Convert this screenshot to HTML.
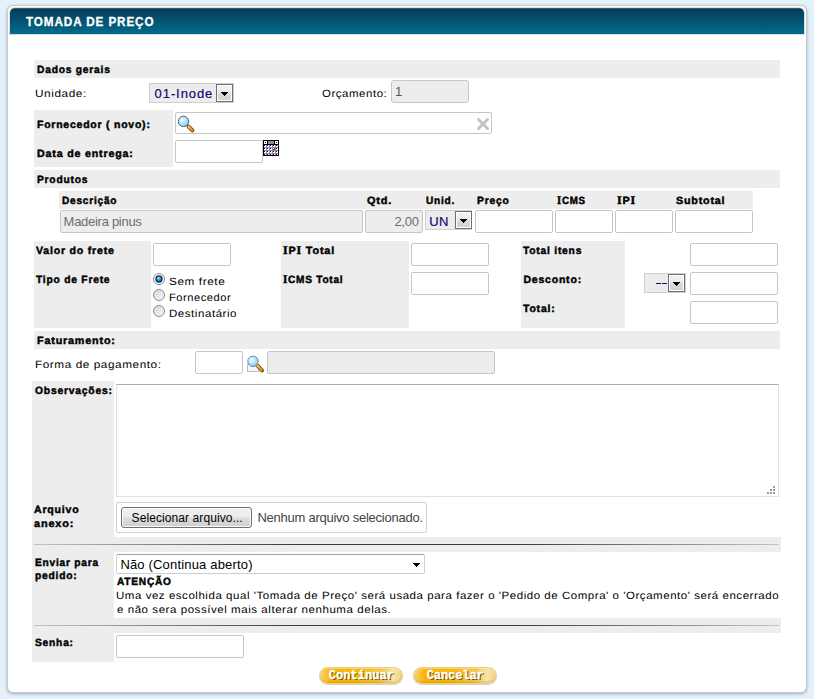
<!DOCTYPE html>
<html><head><meta charset="utf-8"><style>
*{box-sizing:border-box;margin:0;padding:0}
html,body{width:814px;height:699px;overflow:hidden;background:#e3f1fc;font-family:"Liberation Sans",sans-serif;position:relative}
.a{position:absolute}
.t{position:absolute;white-space:nowrap;font-family:"Liberation Sans",sans-serif}
.bar{position:absolute;background:#ededed}
.in{position:absolute;background:#fff;border:1px solid #c6c6c6;border-radius:2px}
.dis{background:#ededed;border-color:#c6c6c6}
.sel{position:absolute;background:#ececec;border:1px solid #cfcfcf}
.sb{position:absolute;border:1px solid #6f6f6f;background:linear-gradient(#f3f3f3 0,#ebebeb 45%,#dcdcdc 50%,#d0d0d0 100%);box-shadow:inset 0 0 0 1px #fff}
.tri{position:absolute;width:0;height:0;border-left:4px solid transparent;border-right:4px solid transparent;border-top:4px solid #000}
.hr{position:absolute;height:1px;background:linear-gradient(90deg,#c4c4c4 0,#3a3a3a 35%,#3a3a3a 65%,#c4c4c4 100%)}
.I{font-family:"Liberation Serif";font-size:11.5px}

</style></head><body>
<div class="a" style="left:7px;top:5px;width:800px;height:688px;background:#fff;border:1px solid #c8c8c8;border-radius:6px;box-shadow:0 1px 3px rgba(70,90,110,.45)"></div>
<div class="a" style="left:9px;top:7px;width:796px;height:28px;border:1px solid #dedada;border-bottom-color:#dcdcdc;border-radius:6px 6px 0 0"></div>
<div class="a" style="left:10px;top:8px;width:794px;height:26px;border-radius:5px 5px 0 0;background:linear-gradient(#46565e 0,#46565e 1px,#023d5a 1px,#036b8b 100%)"></div>

<!-- Dados gerais -->
<div class="bar" style="left:34px;top:60px;width:746px;height:18px"></div>
<div class="sel" style="left:149px;top:83px;width:85px;height:20px"><div class="sb" style="left:66px;top:0px;width:17px;height:18px"><svg class="a" style="left:4px;top:7px" width="7" height="4" shape-rendering="crispEdges"><path d="M0 0h7v1h-1v1h-1v1h-1v1h-1v-1h-1v-1h-1v-1h-1z" fill="#000"/></svg></div></div>
<div class="in dis" style="left:391px;top:80px;width:78px;height:23px;border-radius:3px"></div>
<div class="bar" style="left:34px;top:110px;width:139px;height:57px"></div>
<div class="in" style="left:175px;top:112px;width:317px;height:22px"></div>
<div class="in" style="left:175px;top:140px;width:88px;height:23px"></div>

<!-- Produtos -->
<div class="bar" style="left:34px;top:170px;width:746px;height:18px"></div>
<div class="bar" style="left:59px;top:191px;width:694px;height:18px"></div>
<div class="in dis" style="left:60px;top:210px;width:303px;height:23px"></div>
<div class="in dis" style="left:365px;top:210px;width:58px;height:23px"></div>
<div class="sel" style="left:425px;top:210px;width:47px;height:20px"><div class="sb" style="left:29px;top:0px;width:17px;height:18px"><svg class="a" style="left:4px;top:7px" width="7" height="4" shape-rendering="crispEdges"><path d="M0 0h7v1h-1v1h-1v1h-1v1h-1v-1h-1v-1h-1v-1h-1z" fill="#000"/></svg></div></div>
<div class="in" style="left:475px;top:210px;width:78px;height:23px"></div>
<div class="in" style="left:555px;top:210px;width:58px;height:23px"></div>
<div class="in" style="left:615px;top:210px;width:58px;height:23px"></div>
<div class="in" style="left:675px;top:210px;width:78px;height:23px"></div>

<!-- frete -->
<div class="bar" style="left:34px;top:241px;width:117px;height:87px"></div>
<div class="in" style="left:153px;top:243px;width:78px;height:23px"></div>
<div class="bar" style="left:281px;top:241px;width:128px;height:87px"></div>
<div class="in" style="left:411px;top:243px;width:78px;height:23px"></div>
<div class="in" style="left:411px;top:272px;width:78px;height:23px"></div>
<div class="bar" style="left:521px;top:241px;width:104px;height:87px"></div>
<div class="in" style="left:690px;top:243px;width:88px;height:23px"></div>
<div class="in" style="left:690px;top:272px;width:88px;height:23px"></div>
<div class="in" style="left:690px;top:301px;width:88px;height:23px"></div>
<div class="sel" style="left:644px;top:273px;width:42px;height:20px"><div class="sb" style="left:23px;top:0px;width:17px;height:18px"><svg class="a" style="left:4px;top:7px" width="7" height="4" shape-rendering="crispEdges"><path d="M0 0h7v1h-1v1h-1v1h-1v1h-1v-1h-1v-1h-1v-1h-1z" fill="#000"/></svg></div><div class="a" style="left:11px;top:9px;width:5px;height:1px;background:#0e0b70"></div><div class="a" style="left:17px;top:9px;width:5px;height:1px;background:#0e0b70"></div></div>

<!-- faturamento -->
<div class="bar" style="left:34px;top:331px;width:746px;height:18px"></div>
<div class="in" style="left:195px;top:351px;width:48px;height:23px"></div>
<div class="in dis" style="left:267px;top:351px;width:228px;height:23px"></div>

<!-- observacoes -->
<div class="bar" style="left:32px;top:381px;width:82px;height:156px"></div>
<div class="a" style="left:116px;top:384px;width:663px;height:113px;background:#fff;border:1px solid #dde2ea;border-top-color:#a9abb0"></div>
<div class="in" style="left:116px;top:502px;width:311px;height:31px;border-color:#d2d2d2"></div>
<div class="a" style="left:121px;top:507px;width:131px;height:21px;border:1px solid #707070;border-radius:3px;background:linear-gradient(#f2f2f2 0,#ebebeb 48%,#dddddd 52%,#cfcfcf 100%);box-shadow:inset 0 0 0 1px #fbfbfb"></div>

<!-- enviar -->
<div class="bar" style="left:32px;top:537px;width:749px;height:15px"></div>
<div class="hr" style="left:34px;top:544px;width:745px"></div>
<div class="bar" style="left:32px;top:552px;width:82px;height:66px"></div>
<div class="a" style="left:116px;top:554px;width:309px;height:20px;background:#fff;border:1px solid #c9cfd6;border-top-color:#9fa3a8;border-radius:2px"><svg class="a" style="left:296px;top:8px" width="7" height="4" shape-rendering="crispEdges"><path d="M0 0h7v1h-1v1h-1v1h-1v1h-1v-1h-1v-1h-1v-1h-1z" fill="#000"/></svg></div>
<div class="bar" style="left:32px;top:618px;width:749px;height:15px"></div>
<div class="hr" style="left:34px;top:625px;width:745px"></div>
<div class="bar" style="left:32px;top:633px;width:82px;height:29px"></div>
<div class="in" style="left:116px;top:635px;width:128px;height:23px"></div>

<!-- orange buttons -->
<div class="a" style="left:319px;top:667px;width:84px;height:17px;border-radius:8.5px;border:1px solid #e9cf86;background:linear-gradient(90deg,#f3d684 0,#fcb300 13%,#f9b500 45%,#f3c64c 75%,#f8e3a9 89%,#efd38a 100%);box-shadow:inset 0 1px 1px rgba(255,235,180,.55),inset 0 -2px 1px rgba(190,130,0,.22),0 1px 0 rgba(150,130,90,.35)"></div>
<div class="a" style="left:413px;top:667px;width:84px;height:17px;border-radius:8.5px;border:1px solid #e9cf86;background:linear-gradient(90deg,#f3d684 0,#fcb300 13%,#f9b500 45%,#f3c64c 75%,#f8e3a9 89%,#efd38a 100%);box-shadow:inset 0 1px 1px rgba(255,235,180,.55),inset 0 -2px 1px rgba(190,130,0,.22),0 1px 0 rgba(150,130,90,.35)"></div>

<!-- icons -->
<svg class="a" style="left:176px;top:114px" width="20" height="20" viewBox="0 0 20 20">
<defs><radialGradient id="lens" cx="35%" cy="35%" r="70%"><stop offset="0" stop-color="#f0fcff"/><stop offset="1" stop-color="#7fcdf0"/></radialGradient>
<linearGradient id="hdl" x1="0" y1="0" x2="1" y2="1"><stop offset="0" stop-color="#f7c85a"/><stop offset="1" stop-color="#d88a10"/></linearGradient></defs>
<line x1="12.6" y1="12.6" x2="16.4" y2="16.4" stroke="#6b4410" stroke-width="4" stroke-linecap="round"/>
<line x1="12.6" y1="12.6" x2="16.4" y2="16.4" stroke="url(#hdl)" stroke-width="2.2" stroke-linecap="round"/>
<circle cx="7.5" cy="7.4" r="5.2" fill="url(#lens)" stroke="#4a5a84" stroke-width="1"/>
</svg>
<svg class="a" style="left:476px;top:117px" width="14" height="14" viewBox="0 0 14 14">
<path d="M2.5 2.5 L11.5 11.5 M11.5 2.5 L2.5 11.5" stroke="#c2c2c2" stroke-width="3" stroke-linecap="round"/>
</svg>
<svg class="a" style="left:263px;top:140px" width="16" height="16" viewBox="0 0 16 16" shape-rendering="crispEdges">
<rect x="0" y="0" width="16" height="16" fill="#000"/>
<rect x="1" y="1" width="3" height="3" fill="#fff"/><rect x="2" y="2" width="1" height="1" fill="#000"/>
<rect x="12" y="1" width="3" height="3" fill="#fff"/><rect x="13" y="2" width="1" height="1" fill="#000"/>
<rect x="5" y="1" width="6" height="3" fill="#8c8c8c"/>
<rect x="1" y="5" width="14" height="10" fill="#8c8c8c"/>
<g fill="#fff">
<rect x="1" y="5" width="2" height="2"/><rect x="4" y="5" width="2" height="2"/><rect x="7" y="5" width="2" height="2"/><rect x="10" y="5" width="2" height="2"/><rect x="13" y="5" width="2" height="2"/>
<rect x="1" y="8" width="2" height="2"/><rect x="4" y="8" width="2" height="2"/><rect x="7" y="8" width="2" height="2"/><rect x="13" y="8" width="2" height="2"/>
<rect x="1" y="11" width="2" height="2"/><rect x="4" y="11" width="2" height="2"/><rect x="7" y="11" width="2" height="2"/><rect x="10" y="11" width="2" height="2"/><rect x="13" y="11" width="2" height="2"/>
<rect x="1" y="14" width="2" height="1"/><rect x="4" y="14" width="2" height="1"/><rect x="7" y="14" width="2" height="1"/><rect x="10" y="14" width="2" height="1"/><rect x="13" y="14" width="2" height="1"/>
</g>
<g fill="#0000e0">
<rect x="1" y="5" width="1" height="1"/><rect x="4" y="5" width="1" height="1"/><rect x="7" y="5" width="1" height="1"/><rect x="10" y="5" width="1" height="1"/><rect x="13" y="5" width="1" height="1"/>
<rect x="1" y="8" width="1" height="1"/><rect x="4" y="8" width="1" height="1"/><rect x="7" y="8" width="1" height="1"/><rect x="13" y="8" width="1" height="1"/>
<rect x="1" y="11" width="1" height="1"/><rect x="4" y="11" width="1" height="1"/><rect x="7" y="11" width="1" height="1"/><rect x="10" y="11" width="1" height="1"/><rect x="13" y="11" width="1" height="1"/>
<rect x="1" y="14" width="1" height="1"/><rect x="4" y="14" width="1" height="1"/><rect x="7" y="14" width="1" height="1"/><rect x="10" y="14" width="1" height="1"/><rect x="13" y="14" width="1" height="1"/>
</g>
<rect x="10" y="8" width="2" height="2" fill="#f00"/><rect x="10" y="8" width="1" height="1" fill="#ff0"/>
</svg>
<svg class="a" style="left:153px;top:273px" width="12" height="48" viewBox="0 0 12 48">
<defs><radialGradient id="dot" cx="40%" cy="30%" r="70%"><stop offset="0" stop-color="#b8eeff"/><stop offset=".45" stop-color="#3aa8e8"/><stop offset="1" stop-color="#0f6cc0"/></radialGradient>
<linearGradient id="rg" x1="0" y1="0" x2="1" y2="1"><stop offset="0" stop-color="#d4d4d4"/><stop offset="1" stop-color="#fafafa"/></linearGradient></defs>
<circle cx="6" cy="6" r="5.5" fill="#fff" stroke="#8a8a8a" stroke-width="1"/>
<circle cx="6" cy="6" r="3.7" fill="#0f2f52"/>
<circle cx="6" cy="6" r="2.4" fill="url(#dot)"/>
<circle cx="6" cy="22" r="5.5" fill="url(#rg)" stroke="#8e8e8e" stroke-width="1"/>
<circle cx="6" cy="38" r="5.5" fill="url(#rg)" stroke="#8e8e8e" stroke-width="1"/>
</svg>
<svg class="a" style="left:246px;top:355px" width="18" height="18" viewBox="0 0 18 18">
<rect x="1.5" y="9.5" width="11" height="7" fill="#f4f6fb" stroke="#b8bfd8" stroke-width="1"/>
<line x1="11.5" y1="10.5" x2="16" y2="15.5" stroke="#6b4410" stroke-width="4" stroke-linecap="round"/>
<line x1="11.5" y1="10.5" x2="16" y2="15.5" stroke="url(#hdl)" stroke-width="2.2" stroke-linecap="round"/>
<circle cx="7" cy="6.3" r="5.2" fill="url(#lens)" stroke="#6a7ab0" stroke-width="1" opacity=".95"/>
</svg>
<svg class="a" style="left:765px;top:485px" width="11" height="10" viewBox="0 0 11 10" fill="#9c9c9c">
<rect x="8" y="1" width="2" height="2"/><rect x="5" y="4" width="2" height="2"/><rect x="8" y="4" width="2" height="2"/>
<rect x="2" y="7" width="2" height="2"/><rect x="5" y="7" width="2" height="2"/><rect x="8" y="7" width="2" height="2"/>
</svg>

<div class="t" style='left:26.40px;top:15.40px;font-size:13px;line-height:13px;letter-spacing:1.000px;color:#fff;transform:scaleX(0.8993);transform-origin:0 0;font-weight:bold;-webkit-text-stroke:0.3px #fff;'>TOMADA DE PREÇO</div>
<div class="t" style='left:36.80px;top:65.00px;font-size:10.5px;line-height:10.5px;letter-spacing:0.800px;color:#000;transform:scaleX(0.9747);transform-origin:0 0;text-rendering:geometricPrecision;font-weight:bold;-webkit-text-stroke:0.45px #000;'>Dados gerais</div>
<div class="t" style='left:35.27px;top:89.00px;font-size:10.5px;line-height:10.5px;letter-spacing:0.500px;color:#000;transform:scaleX(1.1250);transform-origin:0 0;text-rendering:geometricPrecision;'>Unidade:</div>
<div class="t" style='left:321.60px;top:89.00px;font-size:10.5px;line-height:10.5px;letter-spacing:0.500px;color:#000;transform:scaleX(1.0915);transform-origin:0 0;text-rendering:geometricPrecision;'>Orçamento:</div>
<div class="t" style='left:36.70px;top:120.00px;font-size:10.5px;line-height:10.5px;letter-spacing:0.800px;color:#000;transform:scaleX(0.9938);transform-origin:0 0;text-rendering:geometricPrecision;font-weight:bold;-webkit-text-stroke:0.45px #000;'>Fornecedor ( novo):</div>
<div class="t" style='left:36.70px;top:149.00px;font-size:10.5px;line-height:10.5px;letter-spacing:0.800px;color:#000;transform:scaleX(1.0160);transform-origin:0 0;text-rendering:geometricPrecision;font-weight:bold;-webkit-text-stroke:0.45px #000;'>Data de entrega:</div>
<div class="t" style='left:36.80px;top:175.00px;font-size:10.5px;line-height:10.5px;letter-spacing:0.800px;color:#000;transform:scaleX(0.9750);transform-origin:0 0;text-rendering:geometricPrecision;font-weight:bold;-webkit-text-stroke:0.45px #000;'>Produtos</div>
<div class="t" style='left:61.70px;top:196.00px;font-size:10.5px;line-height:10.5px;letter-spacing:0.800px;color:#000;transform:scaleX(0.9632);transform-origin:0 0;text-rendering:geometricPrecision;font-weight:bold;-webkit-text-stroke:0.45px #000;'>Descrição</div>
<div class="t" style='left:366.50px;top:196.00px;font-size:10.5px;line-height:10.5px;letter-spacing:0.800px;color:#000;transform:scaleX(1.0435);transform-origin:0 0;text-rendering:geometricPrecision;font-weight:bold;-webkit-text-stroke:0.45px #000;'>Qtd.</div>
<div class="t" style='left:426.40px;top:196.00px;font-size:10.5px;line-height:10.5px;letter-spacing:0.800px;color:#000;transform:scaleX(0.9621);transform-origin:0 0;text-rendering:geometricPrecision;font-weight:bold;-webkit-text-stroke:0.45px #000;'>Unid.</div>
<div class="t" style='left:477.00px;top:196.00px;font-size:10.5px;line-height:10.5px;letter-spacing:0.800px;color:#000;transform:scaleX(0.9812);transform-origin:0 0;text-rendering:geometricPrecision;font-weight:bold;-webkit-text-stroke:0.45px #000;'>Preço</div>
<div class="t" style='left:556.80px;top:196.00px;font-size:10.5px;line-height:10.5px;letter-spacing:0.800px;color:#000;transform:scaleX(0.9267);transform-origin:0 0;text-rendering:geometricPrecision;font-weight:bold;-webkit-text-stroke:0.45px #000;'><span class="I">I</span>CMS</div>
<div class="t" style='left:616.50px;top:196.00px;font-size:10.5px;line-height:10.5px;letter-spacing:0.800px;color:#000;transform:scaleX(1.0333);transform-origin:0 0;text-rendering:geometricPrecision;font-weight:bold;-webkit-text-stroke:0.45px #000;'><span class="I">I</span>P<span class="I">I</span></div>
<div class="t" style='left:675.90px;top:196.00px;font-size:10.5px;line-height:10.5px;letter-spacing:0.800px;color:#000;transform:scaleX(1.0191);transform-origin:0 0;text-rendering:geometricPrecision;font-weight:bold;-webkit-text-stroke:0.45px #000;'>Subtotal</div>
<div class="t" style='left:36.40px;top:246.00px;font-size:10.5px;line-height:10.5px;letter-spacing:0.800px;color:#000;transform:scaleX(1.0051);transform-origin:0 0;text-rendering:geometricPrecision;font-weight:bold;-webkit-text-stroke:0.45px #000;'>Valor do frete</div>
<div class="t" style='left:36.40px;top:275.00px;font-size:10.5px;line-height:10.5px;letter-spacing:0.800px;color:#000;transform:scaleX(0.9760);transform-origin:0 0;text-rendering:geometricPrecision;font-weight:bold;-webkit-text-stroke:0.45px #000;'>Tipo de Frete</div>
<div class="t" style='left:283.40px;top:246.00px;font-size:10.5px;line-height:10.5px;letter-spacing:0.800px;color:#000;transform:scaleX(1.0327);transform-origin:0 0;text-rendering:geometricPrecision;font-weight:bold;-webkit-text-stroke:0.45px #000;'><span class="I">I</span>P<span class="I">I</span> Total</div>
<div class="t" style='left:283.40px;top:275.00px;font-size:10.5px;line-height:10.5px;letter-spacing:0.800px;color:#000;transform:scaleX(0.9581);transform-origin:0 0;text-rendering:geometricPrecision;font-weight:bold;-webkit-text-stroke:0.45px #000;'><span class="I">I</span>CMS Total</div>
<div class="t" style='left:523.40px;top:246.00px;font-size:10.5px;line-height:10.5px;letter-spacing:0.800px;color:#000;transform:scaleX(0.9767);transform-origin:0 0;text-rendering:geometricPrecision;font-weight:bold;-webkit-text-stroke:0.45px #000;'>Total itens</div>
<div class="t" style='left:523.40px;top:275.00px;font-size:10.5px;line-height:10.5px;letter-spacing:0.800px;color:#000;text-rendering:geometricPrecision;font-weight:bold;-webkit-text-stroke:0.45px #000;'>Desconto:</div>
<div class="t" style='left:523.40px;top:304.00px;font-size:10.5px;line-height:10.5px;letter-spacing:0.800px;color:#000;transform:scaleX(0.9968);transform-origin:0 0;text-rendering:geometricPrecision;font-weight:bold;-webkit-text-stroke:0.45px #000;'>Total:</div>
<div class="t" style='left:36.80px;top:336.00px;font-size:10.5px;line-height:10.5px;letter-spacing:0.800px;color:#000;transform:scaleX(1.0263);transform-origin:0 0;text-rendering:geometricPrecision;font-weight:bold;-webkit-text-stroke:0.45px #000;'>Faturamento:</div>
<div class="t" style='left:35.08px;top:360.00px;font-size:10.5px;line-height:10.5px;letter-spacing:0.500px;color:#000;transform:scaleX(1.1216);transform-origin:0 0;text-rendering:geometricPrecision;'>Forma de pagamento:</div>
<div class="t" style='left:34.70px;top:386.00px;font-size:10.5px;line-height:10.5px;letter-spacing:0.800px;color:#000;transform:scaleX(0.9821);transform-origin:0 0;text-rendering:geometricPrecision;font-weight:bold;-webkit-text-stroke:0.45px #000;'>Observações:</div>
<div class="t" style='left:34.40px;top:505.00px;font-size:10.5px;line-height:10.5px;letter-spacing:0.800px;color:#000;transform:scaleX(1.0045);transform-origin:0 0;text-rendering:geometricPrecision;font-weight:bold;-webkit-text-stroke:0.45px #000;'>Arquivo</div>
<div class="t" style='left:34.40px;top:519.00px;font-size:10.5px;line-height:10.5px;letter-spacing:0.800px;color:#000;transform:scaleX(1.0378);transform-origin:0 0;text-rendering:geometricPrecision;font-weight:bold;-webkit-text-stroke:0.45px #000;'>anexo:</div>
<div class="t" style='left:34.60px;top:557.50px;font-size:10.5px;line-height:10.5px;letter-spacing:0.800px;color:#000;transform:scaleX(0.9667);transform-origin:0 0;text-rendering:geometricPrecision;font-weight:bold;-webkit-text-stroke:0.45px #000;'>Enviar para</div>
<div class="t" style='left:34.60px;top:571.00px;font-size:10.5px;line-height:10.5px;letter-spacing:0.800px;color:#000;transform:scaleX(0.9738);transform-origin:0 0;text-rendering:geometricPrecision;font-weight:bold;-webkit-text-stroke:0.45px #000;'>pedido:</div>
<div class="t" style='left:34.60px;top:638.00px;font-size:10.5px;line-height:10.5px;letter-spacing:0.800px;color:#000;transform:scaleX(0.9744);transform-origin:0 0;text-rendering:geometricPrecision;font-weight:bold;-webkit-text-stroke:0.45px #000;'>Senha:</div>
<div class="t" style='left:116.80px;top:577.00px;font-size:10.5px;line-height:10.5px;letter-spacing:0.800px;color:#000;transform:scaleX(0.9643);transform-origin:0 0;text-rendering:geometricPrecision;font-weight:bold;-webkit-text-stroke:0.45px #000;'>ATENÇÃO</div>
<div class="t" style='left:115.71px;top:591.00px;font-size:10.5px;line-height:10.5px;letter-spacing:0.500px;color:#000;transform:scaleX(1.0940);transform-origin:0 0;text-rendering:geometricPrecision;'>Uma vez escolhida qual 'Tomada de Preço' será usada para fazer o 'Pedido de Compra' o 'Orçamento' será encerrado</div>
<div class="t" style='left:116.80px;top:605.00px;font-size:10.5px;line-height:10.5px;letter-spacing:0.500px;color:#000;transform:scaleX(1.0972);transform-origin:0 0;text-rendering:geometricPrecision;'>e não sera possível mais alterar nenhuma delas.</div>
<div class="t" style='left:169.28px;top:277.00px;font-size:10.5px;line-height:10.5px;letter-spacing:0.500px;color:#000;transform:scaleX(1.1250);transform-origin:0 0;text-rendering:geometricPrecision;'>Sem frete</div>
<div class="t" style='left:169.34px;top:293.00px;font-size:10.5px;line-height:10.5px;letter-spacing:0.500px;color:#000;transform:scaleX(1.0614);transform-origin:0 0;text-rendering:geometricPrecision;'>Fornecedor</div>
<div class="t" style='left:169.30px;top:308.50px;font-size:10.5px;line-height:10.5px;letter-spacing:0.500px;color:#000;transform:scaleX(1.0967);transform-origin:0 0;text-rendering:geometricPrecision;'>Destinatário</div>
<div class="t" style='left:63.60px;top:215.00px;font-size:13px;line-height:13px;letter-spacing:-0.283px;color:#6d6d6d;'>Madeira pinus</div>
<div class="t" style='left:394.40px;top:215.00px;font-size:13px;line-height:13px;letter-spacing:-0.267px;color:#6d6d6d;'>2,00</div>
<div class="t" style='left:429.30px;top:214.50px;font-size:13px;line-height:13px;letter-spacing:0.200px;color:#0e0b70;-webkit-text-stroke:0.2px #0e0b70;'>UN</div>
<div class="t" style='left:154.60px;top:87.00px;font-size:13px;line-height:13px;letter-spacing:0.914px;color:#0e0b70;-webkit-text-stroke:0.2px #0e0b70;'>01-Inode</div>
<div class="t" style='left:395.00px;top:85.00px;font-size:13px;line-height:13px;letter-spacing:0.000px;color:#555;'>1</div>
<div class="t" style='left:120.40px;top:558.00px;font-size:13px;line-height:13px;letter-spacing:0.175px;color:#000;'>Não (Continua aberto)</div>
<div class="t" style='left:257.40px;top:511.00px;font-size:13px;line-height:13px;letter-spacing:-0.246px;color:#444;'>Nenhum arquivo selecionado.</div>
<div class="t" style='left:131.60px;top:512.00px;font-size:12px;line-height:12px;letter-spacing:0.085px;color:#000;'>Selecionar arquivo...</div>
<div class="t" style='left:328.80px;top:670.00px;font-size:12px;line-height:12px;letter-spacing:0.050px;color:#fff;font-weight:bold;-webkit-text-stroke:0.35px #fff;font-family:"Liberation Mono";text-shadow:1px 1px 0 #5e4600;'>Continuar</div>
<div class="t" style='left:426.70px;top:670.00px;font-size:12px;line-height:12px;letter-spacing:-0.071px;color:#fff;font-weight:bold;-webkit-text-stroke:0.35px #fff;font-family:"Liberation Mono";text-shadow:1px 1px 0 #5e4600;'>Cancelar</div>
</body></html>
